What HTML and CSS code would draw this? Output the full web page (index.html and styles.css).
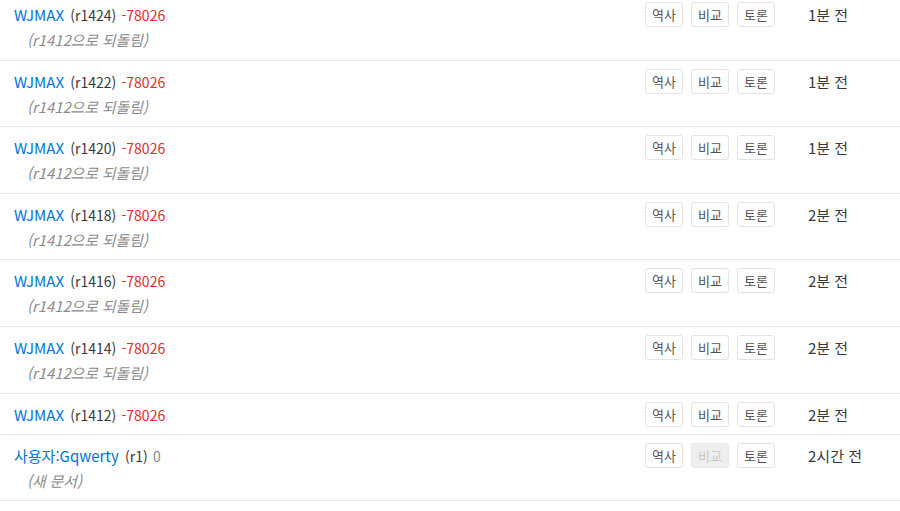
FILE: index.html
```html
<!DOCTYPE html>
<html lang="ko">
<head>
<meta charset="utf-8">
<link rel="stylesheet" href="styles.css">
</head>
<body>
<div class="list">
  <div class="row">
    <div class="info">
      <div class="line"><a class="doc">WJMAX</a> <span class="rev">(r1424)</span> <span class="diff neg">-78026</span></div>
      <div class="note">(r1412으로 되돌림)</div>
    </div>
    <div class="btns"><span class="btn">역사</span><span class="btn">비교</span><span class="btn">토론</span></div>
    <div class="time">1분 전</div>
  </div>
  <div class="row">
    <div class="info">
      <div class="line"><a class="doc">WJMAX</a> <span class="rev">(r1422)</span> <span class="diff neg">-78026</span></div>
      <div class="note">(r1412으로 되돌림)</div>
    </div>
    <div class="btns"><span class="btn">역사</span><span class="btn">비교</span><span class="btn">토론</span></div>
    <div class="time">1분 전</div>
  </div>
  <div class="row">
    <div class="info">
      <div class="line"><a class="doc">WJMAX</a> <span class="rev">(r1420)</span> <span class="diff neg">-78026</span></div>
      <div class="note">(r1412으로 되돌림)</div>
    </div>
    <div class="btns"><span class="btn">역사</span><span class="btn">비교</span><span class="btn">토론</span></div>
    <div class="time">1분 전</div>
  </div>
  <div class="row">
    <div class="info">
      <div class="line"><a class="doc">WJMAX</a> <span class="rev">(r1418)</span> <span class="diff neg">-78026</span></div>
      <div class="note">(r1412으로 되돌림)</div>
    </div>
    <div class="btns"><span class="btn">역사</span><span class="btn">비교</span><span class="btn">토론</span></div>
    <div class="time">2분 전</div>
  </div>
  <div class="row">
    <div class="info">
      <div class="line"><a class="doc">WJMAX</a> <span class="rev">(r1416)</span> <span class="diff neg">-78026</span></div>
      <div class="note">(r1412으로 되돌림)</div>
    </div>
    <div class="btns"><span class="btn">역사</span><span class="btn">비교</span><span class="btn">토론</span></div>
    <div class="time">2분 전</div>
  </div>
  <div class="row">
    <div class="info">
      <div class="line"><a class="doc">WJMAX</a> <span class="rev">(r1414)</span> <span class="diff neg">-78026</span></div>
      <div class="note">(r1412으로 되돌림)</div>
    </div>
    <div class="btns"><span class="btn">역사</span><span class="btn">비교</span><span class="btn">토론</span></div>
    <div class="time">2분 전</div>
  </div>
  <div class="row">
    <div class="info">
      <div class="line"><a class="doc">WJMAX</a> <span class="rev">(r1412)</span> <span class="diff neg">-78026</span></div>
    </div>
    <div class="btns"><span class="btn">역사</span><span class="btn">비교</span><span class="btn">토론</span></div>
    <div class="time">2분 전</div>
  </div>
  <div class="row">
    <div class="info">
      <div class="line"><a class="doc">사용자:Gqwerty</a> <span class="rev">(r1)</span> <span class="diff zero">0</span></div>
      <div class="note">(새 문서)</div>
    </div>
    <div class="btns"><span class="btn">역사</span><span class="btn disabled">비교</span><span class="btn">토론</span></div>
    <div class="time">2시간 전</div>
  </div>
</div>
</body>
</html>
```

FILE: styles.css
```css
html, body {
  margin: 0;
  padding: 0;
  background: #fff;
}
body {
  font-family: "Noto Sans CJK KR", "Noto Sans", sans-serif;
  color: #373a3c;
  overflow: hidden;
}
.list {
  margin-top: -6px;
}
.row {
  display: flex;
  align-items: flex-start;
  padding: 8px 0 7px 14px;
  border-bottom: 1px solid #e6e6e6;
}
.info {
  flex: 1;
  min-width: 0;
}
.line {
  height: 25px;
  line-height: 25px;
  font-size: 15px;
  white-space: nowrap;
}
.line > * {
  line-height: 25px;
}
.doc {
  color: #0275d8;
  text-decoration: none;
  font-size: 15px;
}
.rev {
  font-size: 14px;
  color: #373a3c;
  margin-left: 2px;
}
.diff {
  font-size: 14px;
  margin-left: 1px;
}
.neg {
  color: #e02d2d;
}
.zero {
  color: #888;
}
.note {
  height: 25.6px;
  line-height: 25.6px;
  font-size: 14.8px;
  font-style: italic;
  color: #8a8a8a;
  padding-left: 13px;
  white-space: nowrap;
}
.btns {
  display: flex;
  gap: 8px;
  margin-right: 33px;
}
.btn {
  box-sizing: border-box;
  width: 38px;
  height: 25px;
  display: flex;
  align-items: center;
  justify-content: center;
  font-size: 13px;
  color: #555;
  background: #fff;
  border: 1px solid #e3e3e3;
  border-radius: 3px;
}
.btn.disabled {
  background: #eeeeee;
  color: #c8c8c8;
  border-color: #e8e8e8;
}
.time {
  width: 92px;
  font-size: 15px;
  line-height: 25px;
  height: 25px;
  color: #373a3c;
}
```
